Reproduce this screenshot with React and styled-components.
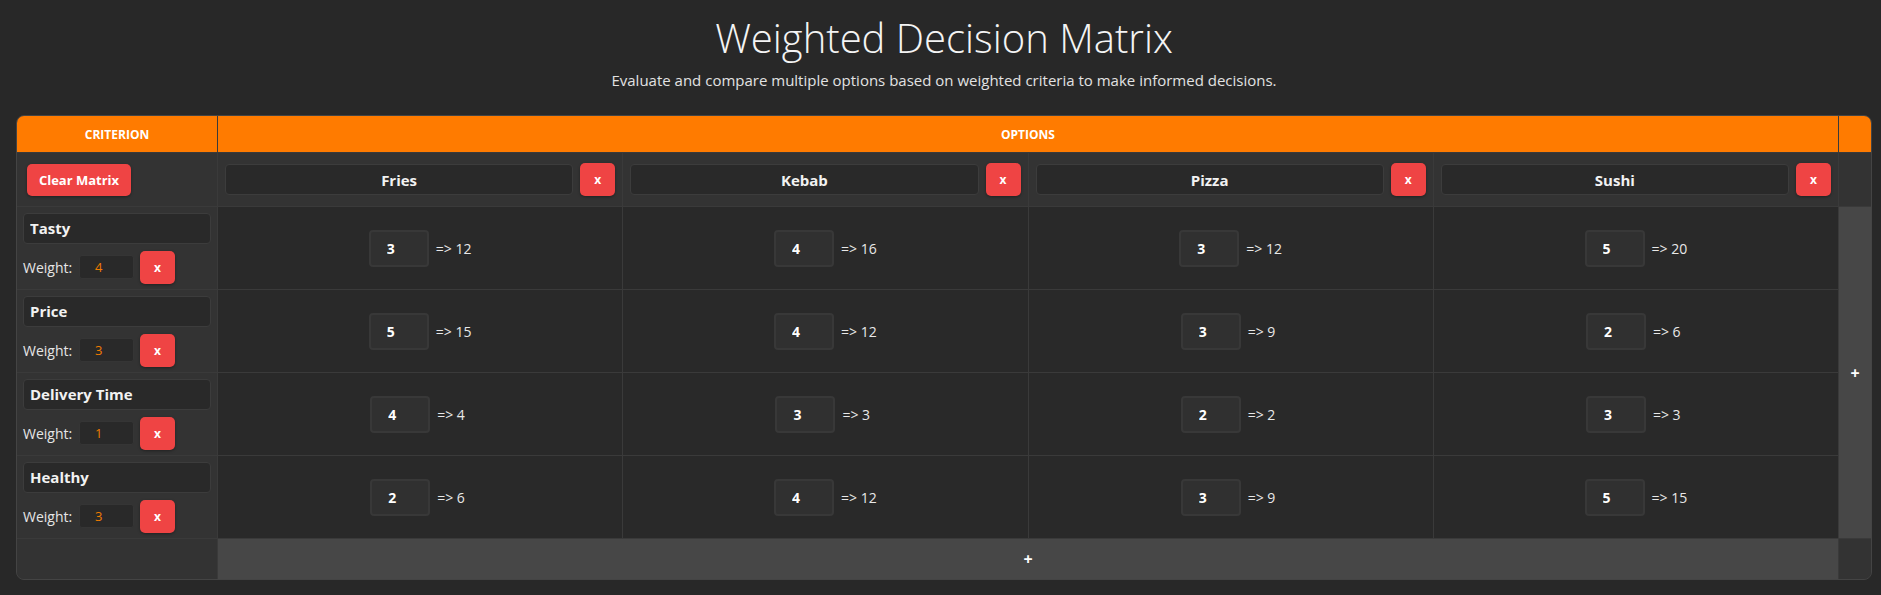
import React, { useState } from "react";
import styled, { createGlobalStyle } from "styled-components";

const Global = createGlobalStyle`
  html, body { margin: 0; padding: 0; background: #282828; }
  body { font-family: "Open Sans", "Noto Sans", sans-serif; color: #eeeeee; }
  * { box-sizing: border-box; }
`;

const Page = styled.div`
  padding: 12px 9px 12px 16px;
  display: flex;
  flex-direction: column;
  align-items: stretch;
`;

const Title = styled.h1`
  margin: 0;
  text-align: center;
  font-weight: 300;
  font-size: 40px;
  color: #f4f4f4;
  line-height: 52px;
`;

const Subtitle = styled.p`
  margin: 6px 0 25px;
  text-align: center;
  font-size: 15px;
  color: #e2e2e2;
  line-height: 20px;
`;

const Table = styled.div`
  display: grid;
  grid-template-columns: 200px repeat(4, 1fr) 32px;
  grid-template-rows: 36px 53px repeat(4, 82px) 40px;
  gap: 1px;
  background: #3a3a3a;
  border: 1px solid #444444;
  border-radius: 8px;
  overflow: hidden;
`;

const HeadCell = styled.div`
  grid-column: span ${(p) => p.$span || 1};
  background: #ff7b00;
  color: #ffffff;
  font-weight: 700;
  font-size: 12px;
  text-transform: uppercase;
  display: flex;
  align-items: center;
  justify-content: center;
`;

const SideCell = styled.div`
  background: #333333;
  display: flex;
  flex-direction: column;
  justify-content: center;
  gap: 7px;
  padding: ${(p) => (p.$head ? "0 10px" : "6px")};
  align-items: ${(p) => (p.$head ? "flex-start" : "stretch")};
`;

const OptionHead = styled.div`
  background: #333333;
  display: flex;
  align-items: center;
  gap: 7px;
  padding: 0 7px;
`;

const TextField = styled.input`
  background: #292929;
  border: 1px solid #3c3c3c;
  border-radius: 4px;
  color: #f2f2f2;
  font-family: inherit;
  font-weight: 700;
  font-size: 15px;
  height: 31px;
  min-width: 0;
  outline: none;
  padding: 0 ${(p) => (p.$center ? "8px" : "6px")};
  text-align: ${(p) => (p.$center ? "center" : "left")};
  flex: ${(p) => (p.$center ? 1 : "none")};
`;

const DangerButton = styled.button`
  background: #ef4444;
  border: none;
  border-radius: 5px;
  color: #ffffff;
  font-family: inherit;
  font-weight: 700;
  font-size: ${(p) => (p.$wide ? "13px" : "12px")};
  height: ${(p) => (p.$wide ? "32px" : "33px")};
  width: ${(p) => (p.$wide ? "104px" : "35px")};
  flex: none;
  cursor: pointer;
  box-shadow: 0 1px 3px rgba(0, 0, 0, 0.35);
  padding: 0;
`;

const WeightRow = styled.div`
  display: flex;
  align-items: center;
  gap: 6px;
  height: 33px;
`;

const WeightLabel = styled.span`
  font-size: 14px;
  color: #e6e6e6;
  width: 50px;
`;

const WeightField = styled.input`
  width: 55px;
  height: 24px;
  background: #292929;
  border: 1px solid #353535;
  border-radius: 3px;
  color: #f07c00;
  font-family: inherit;
  font-size: 13px;
  padding: 0 0 0 15px;
  outline: none;
`;

const ScoreCell = styled.div`
  background: #292929;
  display: flex;
  align-items: center;
  justify-content: center;
  gap: 7px;
`;

const ScoreField = styled.input`
  width: 60px;
  height: 37px;
  background: #303030;
  border: 2px solid #383838;
  border-radius: 4px;
  color: #ffffff;
  font-family: inherit;
  font-weight: 700;
  font-size: 14px;
  padding: 0 0 0 16px;
  outline: none;
`;

const Result = styled.span`
  font-size: 14px;
  color: #e8e8e8;
  min-width: 33px;
`;

const AddCell = styled.button`
  background: #474747;
  border: none;
  color: #ffffff;
  font-family: inherit;
  font-weight: 700;
  font-size: 16px;
  cursor: pointer;
  display: flex;
  align-items: center;
  justify-content: center;
  padding: 0;
  grid-column: ${(p) => (p.$row ? "span 4" : "auto")};
  grid-row: ${(p) => (p.$row ? "auto" : "span 4")};
`;

const Filler = styled.div`
  background: #333333;
`;

const initialOptions = ["Fries", "Kebab", "Pizza", "Sushi"];
const initialCriteria = [
  { name: "Tasty", weight: 4, scores: [3, 4, 3, 5] },
  { name: "Price", weight: 3, scores: [5, 4, 3, 2] },
  { name: "Delivery Time", weight: 1, scores: [4, 3, 2, 3] },
  { name: "Healthy", weight: 3, scores: [2, 4, 3, 5] },
];

export default function App() {
  const [options, setOptions] = useState(initialOptions);
  const [criteria, setCriteria] = useState(initialCriteria);

  const setScore = (ci, oi, v) =>
    setCriteria((cs) =>
      cs.map((c, i) =>
        i === ci ? { ...c, scores: c.scores.map((s, j) => (j === oi ? v : s)) } : c
      )
    );

  return (
    <>
      <Global />
      <Page>
        <Title>Weighted Decision Matrix</Title>
        <Subtitle>
          Evaluate and compare multiple options based on weighted criteria to make informed decisions.
        </Subtitle>
        <Table>
          <HeadCell>Criterion</HeadCell>
          <HeadCell $span={4}>Options</HeadCell>
          <HeadCell />

          <SideCell $head>
            <DangerButton $wide onClick={() => setCriteria([])}>Clear Matrix</DangerButton>
          </SideCell>
          {options.map((o, oi) => (
            <OptionHead key={oi}>
              <TextField
                $center
                value={o}
                onChange={(e) => setOptions(options.map((x, j) => (j === oi ? e.target.value : x)))}
              />
              <DangerButton>x</DangerButton>
            </OptionHead>
          ))}
          <Filler />

          {criteria.map((c, ci) => (
            <React.Fragment key={ci}>
              <SideCell>
                <TextField
                  value={c.name}
                  onChange={(e) =>
                    setCriteria(criteria.map((x, j) => (j === ci ? { ...x, name: e.target.value } : x)))
                  }
                />
                <WeightRow>
                  <WeightLabel>Weight:</WeightLabel>
                  <WeightField
                    value={c.weight}
                    onChange={(e) =>
                      setCriteria(
                        criteria.map((x, j) => (j === ci ? { ...x, weight: Number(e.target.value) || 0 } : x))
                      )
                    }
                  />
                  <DangerButton>x</DangerButton>
                </WeightRow>
              </SideCell>
              {c.scores.map((s, oi) => (
                <ScoreCell key={oi}>
                  <ScoreField
                    value={s}
                    onChange={(e) => setScore(ci, oi, Number(e.target.value) || 0)}
                  />
                  <Result>=&gt; {s * c.weight}</Result>
                </ScoreCell>
              ))}
              {ci === 0 && <AddCell>+</AddCell>}
            </React.Fragment>
          ))}

          <Filler />
          <AddCell $row>+</AddCell>
          <Filler />
        </Table>
      </Page>
    </>
  );
}
